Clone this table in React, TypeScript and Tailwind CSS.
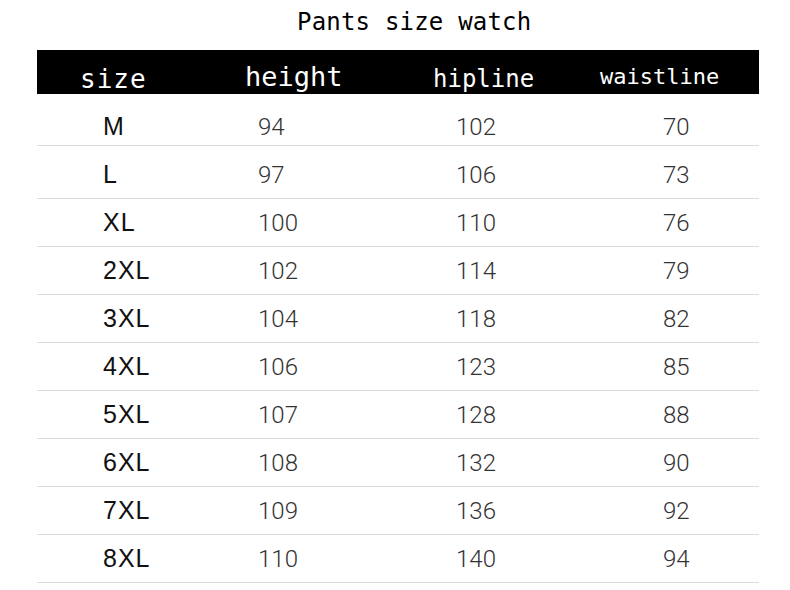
const rows: [string, number, number, number][] = [
  ['M', 94, 102, 70],
  ['L', 97, 106, 73],
  ['XL', 100, 110, 76],
  ['2XL', 102, 114, 79],
  ['3XL', 104, 118, 82],
  ['4XL', 106, 123, 85],
  ['5XL', 107, 128, 88],
  ['6XL', 108, 132, 90],
  ['7XL', 109, 136, 92],
  ['8XL', 110, 140, 94],
];

// first two rows sit a bit taller than the rest
const rowBox = ['h-[52px] pt-[14px]', 'h-[53px] pt-[5px]'];

export default function App() {
  return (
    <div className="w-[790px] h-[590px] bg-white overflow-hidden">
      {/* Title */}
      <div className="pl-[297px] pt-[6px] h-[50px] text-[24px] leading-[32px] tracking-[0.2px] text-black font-['DejaVu_Sans_Mono',monospace]">
        Pants size watch
      </div>

      <div className="ml-[37px] w-[722px]">
        {/* Header */}
        <div className="flex items-end h-[44px] bg-black text-white pl-[43px] font-['DejaVu_Sans_Mono',monospace]">
          <div className="w-[165px] text-[26px] leading-[30px] tracking-[1px]">size</div>
          <div className="w-[188px] text-[27px] leading-[34px]">height</div>
          <div className="w-[167px] text-[24px] leading-[30px]">hipline</div>
          <div className="text-[22px] leading-[34px]">waistline</div>
        </div>

        {/* Rows */}
        {rows.map(([size, h, hip, waist], i) => (
          <div
            key={size}
            className={`flex items-center border-b border-[#dcdcdc] pl-[66px] ${rowBox[i] ?? 'h-[48px]'}`}
          >
            <div className="w-[155px] text-[25px] tracking-[1px] text-[#111] font-['Liberation_Sans',Arial,sans-serif]">
              {size}
            </div>
            <div className="w-[198px] text-[24px] text-[#333] font-light font-['Roboto',sans-serif]">{h}</div>
            <div className="w-[207px] text-[24px] text-[#333] font-light font-['Roboto',sans-serif]">{hip}</div>
            <div className="text-[24px] text-[#333] font-light font-['Roboto',sans-serif]">{waist}</div>
          </div>
        ))}
      </div>
    </div>
  );
}
